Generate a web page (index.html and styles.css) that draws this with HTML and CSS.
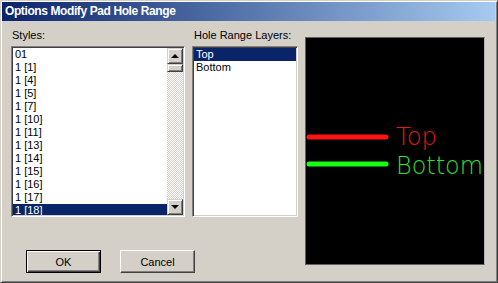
FILE: index.html
```html
<!DOCTYPE html>
<html lang="en">
<head>
  <meta charset="UTF-8">
  <title>Options Modify Pad Hole Range</title>
  <link rel="stylesheet" href="styles.css">
</head>
<body>

  <div class="ventana">
    <div class="titulo">Options Modify Pad Hole Range</div>

    <div class="cliente">
      <div class="izquierda">
        <div class="listas">
          <div class="grupo grupo-estilos">
            <label>Styles:</label>
            <div class="lista">
              <ul class="items">
                <li>01</li>
                <li>1 [1]</li>
                <li>1 [4]</li>
                <li>1 [5]</li>
                <li>1 [7]</li>
                <li>1 [10]</li>
                <li>1 [11]</li>
                <li>1 [13]</li>
                <li>1 [14]</li>
                <li>1 [15]</li>
                <li>1 [16]</li>
                <li>1 [17]</li>
                <li class="sel">1 [18]</li>
              </ul>
              <div class="scroll">
                <div class="btn-scroll"><span class="flecha arriba"></span></div>
                <div class="thumb"></div>
                <div class="pista"></div>
                <div class="btn-scroll"><span class="flecha abajo"></span></div>
              </div>
            </div>
          </div>

          <div class="grupo grupo-capas">
            <label>Hole Range Layers:</label>
            <div class="lista">
              <ul class="items">
                <li class="sel">Top</li>
                <li>Bottom</li>
              </ul>
            </div>
          </div>
        </div>

        <div class="botones">
          <button class="defecto">OK</button>
          <button>Cancel</button>
        </div>
      </div>

      <div class="vista">
        <svg width="178" height="226" viewBox="0 0 178 226">
          <line x1="3" y1="99" x2="80" y2="99" stroke="#ff1414" stroke-width="5" stroke-linecap="round"/>
          <line x1="3" y1="126" x2="80" y2="126" stroke="#14ff14" stroke-width="5" stroke-linecap="round"/>
          <text x="90" y="107" class="txt-top" textLength="41" lengthAdjust="spacingAndGlyphs">Top</text>
          <text x="90" y="136" class="txt-bottom" textLength="87" lengthAdjust="spacingAndGlyphs">Bottom</text>
        </svg>
      </div>
    </div>
  </div>

</body>
</html>
```

FILE: styles.css
```css
* {
  margin: 0;
  padding: 0;
  box-sizing: border-box;
}

html, body {
  width: 498px;
  height: 283px;
  font-family: 'Liberation Sans', Arial, sans-serif;
  font-size: 11px;
  color: #000;
  background: #d4d0c8;
  overflow: hidden;
}

.ventana {
  width: 498px;
  height: 283px;
  background: #d4d0c8;
  border: 1px solid;
  border-color: #d4d0c8 #404040 #404040 #d4d0c8;
  box-shadow: inset 1px 1px #ffffff, inset -1px -1px #808080;
  padding: 1px 2px 2px 1px;
}

.titulo {
  height: 19px;
  padding-left: 3px;
  line-height: 19px;
  font-weight: bold;
  font-size: 12px;
  letter-spacing: -0.4px;
  color: #ffffff;
  background: linear-gradient(to right, #0a246a, #a6caf0);
}

.cliente {
  display: flex;
  align-items: flex-start;
  padding: 8px 0 0 9px;
}

.izquierda {
  display: flex;
  flex-direction: column;
}

.listas {
  display: flex;
  gap: 7px;
}

.grupo {
  display: flex;
  flex-direction: column;
}

.grupo label {
  height: 13px;
  line-height: 13px;
  margin-bottom: 4px;
  padding-left: 1px;
}

.grupo-capas label {
  padding-left: 2px;
}

.lista {
  display: flex;
  height: 171px;
  background: #ffffff;
  border: 1px solid;
  border-color: #808080 #ffffff #ffffff #808080;
  box-shadow: inset 1px 1px #404040, inset -1px -1px #d4d0c8;
  padding: 1px;
  overflow: hidden;
}

.grupo-estilos .lista {
  width: 174px;
}

.grupo-capas .lista {
  width: 106px;
}

.items {
  list-style: none;
  flex: 1;
  overflow: hidden;
}

.items li {
  height: 13px;
  line-height: 13px;
  padding-left: 2px;
  white-space: nowrap;
}

.items li.sel {
  background: #0a246a;
  color: #ffffff;
}

.scroll {
  width: 16px;
  display: flex;
  flex-direction: column;
}

.btn-scroll, .thumb {
  background: #d4d0c8;
  border: 1px solid;
  border-color: #d4d0c8 #404040 #404040 #d4d0c8;
  box-shadow: inset 1px 1px #ffffff, inset -1px -1px #808080;
}

.btn-scroll {
  height: 16px;
  display: flex;
  align-items: center;
  justify-content: center;
}

.thumb {
  height: 8px;
}

.pista {
  flex: 1;
  background: repeating-conic-gradient(#ffffff 0 25%, #d4d0c8 0 50%) 0 0 / 2px 2px;
}

.flecha {
  width: 0;
  height: 0;
  border-left: 4px solid transparent;
  border-right: 4px solid transparent;
}

.flecha.arriba {
  border-bottom: 4px solid #000;
}

.flecha.abajo {
  border-top: 4px solid #000;
}

.botones {
  display: flex;
  gap: 19px;
  margin-top: 33px;
  padding-left: 15px;
}

.botones button {
  width: 75px;
  height: 23px;
  font-family: 'Liberation Sans', Arial, sans-serif;
  font-size: 11px;
  color: #000;
  background: #d4d0c8;
  border: 1px solid;
  border-color: #ffffff #404040 #404040 #ffffff;
  box-shadow: inset -1px -1px #808080;
}

.botones button.defecto {
  border: 1px solid #000;
  box-shadow: inset 1px 1px #ffffff, inset -1px -1px #404040, inset -2px -2px #808080;
}

.vista {
  width: 180px;
  height: 228px;
  margin: 8px 0 0 7px;
  background: #000000;
  border: 1px solid;
  border-color: #606060 #b0b0b0 #606060 #606060;
}

.vista svg {
  display: block;
}

.txt-top,
.txt-bottom {
  font-family: 'DejaVu Sans', 'Liberation Sans', sans-serif;
  font-weight: 200;
  font-size: 24px;
}

.txt-top {
  fill: #e81818;
}

.txt-bottom {
  fill: #2ee02e;
}
```
